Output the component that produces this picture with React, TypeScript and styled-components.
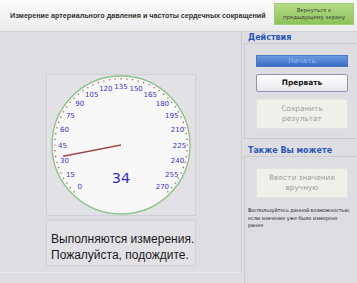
import React from "react";
import styled, { createGlobalStyle } from "styled-components";

const Global = createGlobalStyle`
  html, body { margin: 0; padding: 0; background: #dedee2; }
  body { font-family: "DejaVu Sans", "Liberation Sans", sans-serif; }
`;

const Screen = styled.div`
  width: 357px;
  height: 283px;
  overflow: hidden;
  display: flex;
  flex-direction: column;
  background: #dedee2;
`;

const Header = styled.div`
  height: 32px;
  flex: none;
  display: flex;
  align-items: center;
  justify-content: space-between;
  padding: 0 3px 0 10px;
  box-sizing: border-box;
  background: linear-gradient(#fbfbfb, #ececee);
  border-bottom: 1px solid #d2d2d6;
`;

const Title = styled.div`
  font-family: "Liberation Sans", sans-serif;
  font-size: 7.2px;
  font-weight: bold;
  color: #333;
  white-space: nowrap;
`;

const BackButton = styled.div`
  width: 80px;
  height: 22px;
  align-self: flex-start;
  margin-top: 3px;
  box-sizing: border-box;
  display: flex;
  align-items: center;
  justify-content: center;
  text-align: center;
  font-size: 5.4px;
  line-height: 7px;
  color: #444;
  background: linear-gradient(#b4dc84, #8cc25a);
  border: 1px solid #a0cc78;
`;

const Main = styled.div`
  flex: 1;
  display: flex;
  min-height: 0;
`;

const LeftPanel = styled.div`
  width: 242px;
  flex: none;
  box-sizing: border-box;
  border-right: 1px solid #cfcfd4;
  border-bottom: 1px solid #e6e6ea;
  margin-bottom: 10px;
  display: flex;
  flex-direction: column;
  align-items: flex-start;
  padding: 42px 0 0 46px;
  gap: 4px;
`;

const GaugeBox = styled.div`
  width: 150px;
  height: 142px;
  box-sizing: border-box;
  border: 1px solid #d0d0d5;
  background: #e2e2e6;
`;

const MessageBox = styled.div`
  width: 150px;
  height: 46px;
  box-sizing: border-box;
  border: 1px solid #d0d0d5;
  background: #e2e2e6;
  padding: 10px 0 0 4px;
  font-family: "Liberation Sans", sans-serif;
  font-size: 12px;
  line-height: 16px;
  color: #1a1a1a;
  white-space: nowrap;
`;

const RightPanel = styled.div`
  flex: 1;
  display: flex;
  flex-direction: column;
  padding-left: 2px;
`;

const SectionTitle = styled.div`
  font-family: "DejaVu Sans", sans-serif;
  font-size: 8px;
  font-weight: bold;
  color: #2a58b8;
  line-height: 10px;
  padding: 1px 0 0 4px;
`;

const SectionBox = styled.div<{ $grow?: boolean }>`
  border: 1px solid #cbcbd0;
  border-right: none;
  ${(p) => (p.$grow ? "border-bottom: none; flex: 1;" : "")}
  padding: 11px 0 9px 11px;
  display: flex;
  flex-direction: column;
  gap: 7px;
  margin-bottom: ${(p) => (p.$grow ? "0" : "6px")};
`;

const Btn = styled.div<{ $kind: "primary" | "normal" | "disabled"; $h: number }>`
  width: 92px;
  height: ${(p) => p.$h}px;
  box-sizing: border-box;
  display: flex;
  align-items: center;
  justify-content: center;
  text-align: center;
  font-family: "DejaVu Sans", sans-serif;
  font-size: 7.4px;
  line-height: 10px;
  ${(p) =>
    p.$kind === "primary"
      ? `background: linear-gradient(#6a9ae0, #3c6cc4); color: #8fb4ec; border: 1px solid #4a78c8;`
      : p.$kind === "normal"
      ? `background: linear-gradient(#ffffff, #e8e8ee); color: #111; font-weight: bold; border: 1px solid #8c96b0; border-radius: 2px;`
      : `background: #f0f0ea; color: #a0a0a0; border: 1px solid #e4e4de;`}
`;

const Help = styled.div`
  margin: 2px 0 0 -8px;
  font-family: "DejaVu Sans", sans-serif;
  font-size: 5px;
  line-height: 7.5px;
  color: #222;
  letter-spacing: -0.1px;
`;

const CX = 74;
const CY = 70;

function pos(value: number, r: number) {
  const a = ((-135 + value) * Math.PI) / 180;
  return { x: CX + r * Math.sin(a), y: CY - r * Math.cos(a) };
}

const Gauge: React.FC<{ value: number }> = ({ value }) => {
  const labels: number[] = [];
  for (let v = 0; v <= 270; v += 15) labels.push(v);
  const ticks: number[] = [];
  for (let v = 0; v <= 270; v += 5) ticks.push(v);
  const tip = pos(value, 59);
  return (
    <svg width="148" height="140" viewBox="0 0 148 140">
      <circle cx={CX} cy={CY} r={69} fill="#f8f8f8" stroke="#8cc48c" strokeWidth={1.4} />
      {ticks.map((t) => {
        const a = pos(t, 67);
        const b = pos(t, 65.6);
        return (
          <line key={t} x1={a.x} y1={a.y} x2={b.x} y2={b.y} stroke="#d85050" strokeWidth={1.2} />
        );
      })}
      {labels.map((v) => {
        const p = pos(v, 58.5);
        return (
          <text
            key={v}
            x={p.x}
            y={p.y + 2.5}
            textAnchor="middle"
            fontFamily="DejaVu Sans, sans-serif"
            fontSize="7"
            fill="#3434d0"
          >
            {v}
          </text>
        );
      })}
      <line x1={CX} y1={CY} x2={tip.x} y2={tip.y} stroke="#a04848" strokeWidth={1.4} />
      <text
        x={CX}
        y={CY + 38}
        textAnchor="middle"
        fontFamily="DejaVu Sans, sans-serif"
        fontSize="14.5"
        fill="#3030c8"
      >
        {value}
      </text>
    </svg>
  );
};

export default function App() {
  return (
    <Screen>
      <Global />
      <Header>
        <Title>Измерение артериального давления и частоты сердечных сокращений</Title>
        <BackButton>
          Вернуться к
          <br />
          предыдущему экрану
        </BackButton>
      </Header>
      <Main>
        <LeftPanel>
          <GaugeBox>
            <Gauge value={34} />
          </GaugeBox>
          <MessageBox>
            Выполняются измерения.
            <br />
            Пожалуйста, подождите.
          </MessageBox>
        </LeftPanel>
        <RightPanel>
          <SectionTitle>Действия</SectionTitle>
          <SectionBox>
            <Btn $kind="primary" $h={12}>Начать</Btn>
            <Btn $kind="normal" $h={18}>Прервать</Btn>
            <Btn $kind="disabled" $h={30}>
              Сохранить
              <br />
              результат
            </Btn>
          </SectionBox>
          <SectionTitle>Также Вы можете</SectionTitle>
          <SectionBox $grow>
            <Btn $kind="disabled" $h={30}>
              Ввести значение
              <br />
              вручную
            </Btn>
            <Help>
              Воспользуйтесь данной возможностью,
              <br />
              если значение уже было измерено
              <br />
              ранее
            </Help>
          </SectionBox>
        </RightPanel>
      </Main>
    </Screen>
  );
}
